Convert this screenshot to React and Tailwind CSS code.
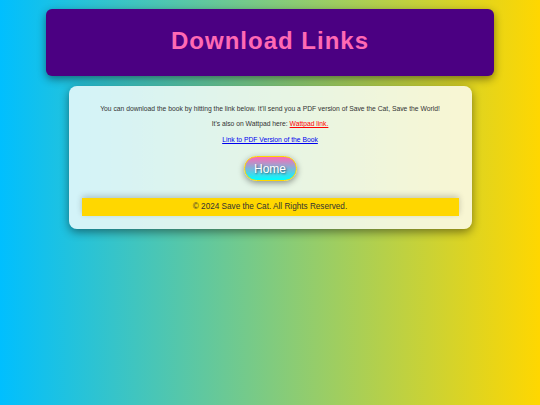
export default function App() {
  return (
    <div
      className="min-h-[405px] w-full bg-[linear-gradient(to_right,#00bfff,#ffd700)] flex flex-col items-center pt-[9px]"
      style={{ fontFamily: '"Liberation Sans", Arial, sans-serif' }}
    >
      {/* Header */}
      <header className="w-[448px] h-[67px] bg-[#4b0082] rounded-[6px] shadow-[0_3px_8px_rgba(0,0,0,0.45)] flex items-center justify-center pb-[4px]">
        <h1 className="text-[24px] font-bold tracking-[1px] text-[#ff69b4]">Download Links</h1>
      </header>

      {/* Content card */}
      <main className="mt-[10px] w-[403px] bg-white/80 rounded-[8px] shadow-[0_3px_10px_rgba(0,0,0,0.45)] px-[13px] pt-[18px] pb-[13px] text-center text-[#333]">
        <p className="text-[6.75px] leading-[9px]">
          You can download the book by hitting the link below. It'll send you a PDF version of Save the Cat, Save the World!
        </p>
        <p className="text-[6.75px] leading-[9px] mt-[6px]">
          It's also on Wattpad here: <a href="#" className="text-[#ff0000] underline">Wattpad link.</a>
        </p>
        <p className="text-[6.75px] leading-[9px] mt-[7px]">
          <a href="#" className="text-[#0000ee] underline">Link to PDF Version of the Book</a>
        </p>
        <div className="mt-[12px] flex justify-center">
          <button className="w-[53px] h-[25px] rounded-full bg-[linear-gradient(to_bottom,#ff69b4,#00ffff)] border border-[#ffd700] text-white text-[12px] shadow-[0_2px_6px_rgba(0,0,0,0.4)] [text-shadow:1px_1px_2px_rgba(0,0,0,0.5)]">
            Home
          </button>
        </div>
        <footer className="mt-[17px] h-[18px] bg-[#ffd700] flex items-center justify-center text-[8.2px] shadow-[0_-2px_6px_rgba(0,0,0,0.2)]">
          © 2024 Save the Cat. All Rights Reserved.
        </footer>
      </main>
    </div>
  );
}
